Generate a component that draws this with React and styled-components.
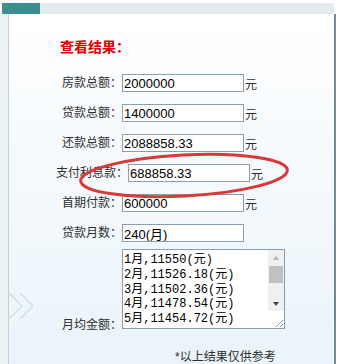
import styled, { createGlobalStyle } from "styled-components";

const GlobalStyle = createGlobalStyle`
  html, body {
    margin: 0;
    padding: 0;
    background: #fff;
  }
  body {
    font-family: "Liberation Sans", "Noto Sans CJK SC", sans-serif;
  }
`;

const Page = styled.div`
  position: relative;
  width: 338px;
  height: 364px;
  overflow: hidden;
  background: #fff;
  display: flex;
  flex-direction: column;
`;

const TopBar = styled.div`
  margin: 3px 4px 0 2px;
  height: 11px;
  display: flex;
  background: #e3ebee;
  flex-shrink: 0;
`;

const TopTab = styled.div`
  width: 38px;
  background: #3c8e8f;
`;

const Body = styled.div`
  flex: 1;
  display: flex;
  margin-right: 2px;
  border-right: 2px solid #6f8c99;
`;

const LeftStrip = styled.div`
  width: 8px;
  background: #ebf3f5;
  border-right: 1px solid #bcd3d7;
`;

const Content = styled.div`
  flex: 1;
  display: flex;
  flex-direction: column;
  align-items: flex-start;
  padding: 24px 0 0 53px;
  background: linear-gradient(to bottom, #ffffff 0%, #f6fafd 40%, #eaf4fa 100%);
`;

const Title = styled.div`
  margin: 0 0 18px -2px;
  font-size: 14px;
  line-height: 18px;
  font-weight: bold;
  color: #e00000;
`;

const Fields = styled.div`
  display: flex;
  flex-direction: column;
  gap: 12px;
`;

const Row = styled.div`
  display: flex;
  align-items: center;
  height: 18px;
  margin-left: ${(p) => p.$shift || 0}px;
`;

const Label = styled.span`
  font-size: 12px;
  line-height: 14px;
  color: #2e2e2e;
  white-space: nowrap;
`;

const Field = styled.input`
  box-sizing: border-box;
  width: 122px;
  height: 18px;
  margin: 0;
  padding: 0 1px;
  border: 1px solid #8c9dac;
  background: #fff;
  font-family: "Liberation Sans", "Noto Sans CJK SC", sans-serif;
  font-size: 13px;
  color: #000;
  outline: none;
`;

const Unit = styled.span`
  margin-left: 1px;
  font-size: 12px;
  color: #2e2e2e;
`;

const ListRow = styled.div`
  display: flex;
  align-items: flex-end;
  margin-top: 7px;
`;

const ListLabel = styled(Label)`
  margin-bottom: -3px;
`;

const ListBox = styled.div`
  box-sizing: border-box;
  width: 163px;
  height: 80px;
  display: flex;
  border: 1px solid #8c9dac;
  background: #fff;
`;

const ListText = styled.div`
  flex: 1;
  overflow: hidden;
  padding: 3px 0 0 1px;
  font-family: "Liberation Mono", "Noto Sans CJK SC", monospace;
  font-size: 12px;
  line-height: 14.75px;
  color: #000;
  white-space: pre;
`;

const ScrollBar = styled.div`
  width: 16px;
  display: flex;
  flex-direction: column;
  background: #f0f0f0;
`;

const ArrowBtn = styled.div`
  height: 15px;
  display: flex;
  align-items: center;
  justify-content: center;
  &::after {
    content: "";
    border-left: 3px solid transparent;
    border-right: 3px solid transparent;
    ${(p) =>
      p.$down
        ? `border-top: 4px solid ${p.$color};`
        : `border-bottom: 4px solid ${p.$color};`}
  }
`;

const Thumb = styled.div`
  height: 17px;
  margin: 1px 1px 0;
  background: #c1c1c1;
`;

const Track = styled.div`
  flex: 1;
`;

const Grip = styled.div`
  height: 17px;
  background: #fff;
  display: flex;
  align-items: flex-end;
  justify-content: flex-end;
`;

const Footer = styled.div`
  margin: 21px 0 0 113px;
  font-size: 12px;
  line-height: 14px;
  color: #2e2e2e;
  white-space: nowrap;
`;

const Overlay = styled.svg`
  position: absolute;
  left: 0;
  top: 0;
  pointer-events: none;
`;

const rows = [
  { label: "房款总额：", value: "2000000", unit: true },
  { label: "贷款总额：", value: "1400000", unit: true },
  { label: "还款总额：", value: "2088858.33", unit: true },
  { label: "支付利息款：", value: "688858.33", unit: true, shift: -6 },
  { label: "首期付款：", value: "600000", unit: true },
  { label: "贷款月数：", value: "240(月)", unit: false },
];

const months = [
  "1月,11550(元)",
  "2月,11526.18(元)",
  "3月,11502.36(元)",
  "4月,11478.54(元)",
  "5月,11454.72(元)",
];

export default function App() {
  return (
    <>
      <GlobalStyle />
      <Page>
        <TopBar>
          <TopTab />
        </TopBar>
        <Body>
          <LeftStrip />
          <Content>
            <Title>查看结果：</Title>
            <Fields>
              {rows.map((r) => (
                <Row key={r.label} $shift={r.shift}>
                  <Label>{r.label}</Label>
                  <Field readOnly value={r.value} />
                  {r.unit && <Unit>元</Unit>}
                </Row>
              ))}
            </Fields>
            <ListRow>
              <ListLabel>月均金额：</ListLabel>
              <ListBox>
                <ListText>{months.join("\n")}</ListText>
                <ScrollBar>
                  <ArrowBtn $color="#b4b4b4" />
                  <Thumb />
                  <Track />
                  <ArrowBtn $down $color="#404040" />
                  <Grip>
                    <svg width="10" height="10" viewBox="0 0 10 10">
                      <path d="M9 2 L2 9 M9 6 L6 9" stroke="#999" strokeWidth="1" />
                    </svg>
                  </Grip>
                </ScrollBar>
              </ListBox>
            </ListRow>
            <Footer>*以上结果仅供参考</Footer>
          </Content>
        </Body>
        <Overlay width="338" height="364" viewBox="0 0 338 364">
          <polyline points="9,293 22,306 9,319" fill="none" stroke="#cfe2e5" strokeWidth="1.5" />
          <polyline points="20,293 33,306 20,319" fill="none" stroke="#cfe2e5" strokeWidth="1.5" />
          <ellipse
            cx="184"
            cy="175.5"
            rx="103.5"
            ry="20.5"
            transform="rotate(-3 184 175.5)"
            fill="none"
            stroke="#d8393b"
            strokeWidth="3"
          />
        </Overlay>
      </Page>
    </>
  );
}
